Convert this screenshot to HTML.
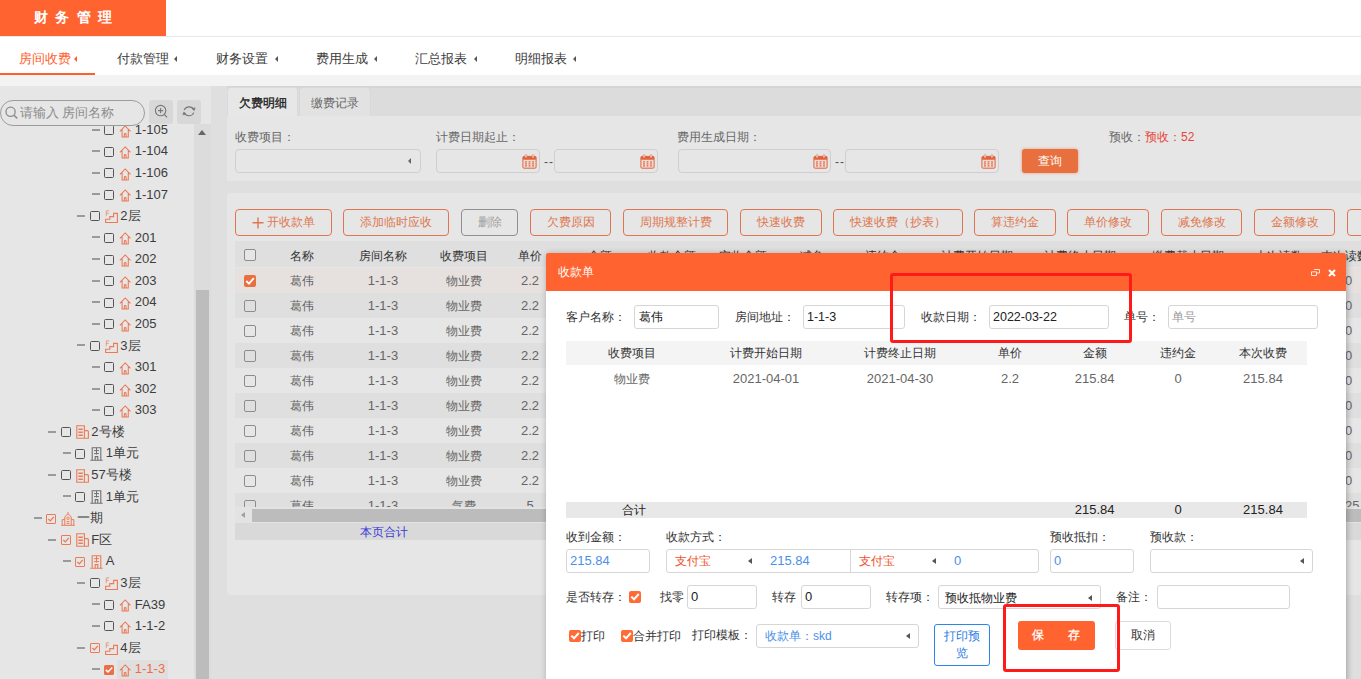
<!DOCTYPE html>
<html><head><meta charset="utf-8">
<style>
*{box-sizing:border-box;margin:0;padding:0}
html,body{width:1361px;height:679px;overflow:hidden;background:#fff}
body{position:relative;font-family:"Liberation Sans",sans-serif;font-size:12px;color:#555}
.a{position:absolute}
.t{position:absolute;white-space:nowrap;line-height:16px}
.nav{position:absolute;top:50.5px;font-size:13px;color:#3a3a3a;line-height:16px;white-space:nowrap}
.arr{position:absolute;width:0;height:0;border-top:3px solid transparent;border-bottom:3px solid transparent;border-right:3.5px solid #555}
.inp{position:absolute;border:1px solid #cfcfcf;border-radius:4px}
.btn{position:absolute;border:1px solid #e0764f;border-radius:4px;color:#e0764f;text-align:center;line-height:24px;font-size:12px;white-space:nowrap}
.cb{position:absolute;width:12px;height:12px;border:1px solid #8a8a8a;border-radius:2px}
.tr{position:absolute;height:21px;line-height:21px;white-space:nowrap;font-size:13px;color:#444}
</style></head><body>
<!-- HEADER -->
<div class="a" style="left:0;top:0;width:166px;height:36px;background:#ff6330"></div>
<div class="t" style="left:34px;top:9px;color:#fff;font-weight:bold;font-size:14px;letter-spacing:7.3px">财务管理</div>
<div class="a" style="left:0;top:36px;width:1361px;height:1px;background:#e8e8e8"></div>
<!-- NAV -->
<div class="nav" style="left:19px;color:#ff5f2e">房间收费</div><div class="arr" style="left:74px;top:56px;border-right-color:#ff5f2e"></div>
<div class="nav" style="left:117px">付款管理</div><div class="arr" style="left:174px;top:56px"></div>
<div class="nav" style="left:216px">财务设置</div><div class="arr" style="left:275px;top:56px"></div>
<div class="nav" style="left:316px">费用生成</div><div class="arr" style="left:374px;top:56px"></div>
<div class="nav" style="left:415px">汇总报表</div><div class="arr" style="left:474px;top:56px"></div>
<div class="nav" style="left:515px">明细报表</div><div class="arr" style="left:573px;top:56px"></div>
<div class="a" style="left:0;top:73px;width:95px;height:2px;background:#ff5f2e"></div>
<div class="a" style="left:0;top:75px;width:1361px;height:11px;background:#f3f3f3"></div>
<!-- CONTENT BG -->
<div class="a" style="left:0;top:86px;width:1361px;height:593px;background:#dfdfdf"></div>
<div class="a" style="left:0;top:86px;width:211px;height:593px;background:#e6e6e6"></div>
<!--LEFT-->
<div class="a" style="left:0;top:124px;width:194px;height:555px;overflow:hidden">
<div class="a" style="left:0;top:-124px;width:194px;height:800px">
<div class="a" style="left:117px;top:660px;width:51px;height:21px;background:#dfdfdf"></div>
<div class="a" style="left:91.7px;top:129px;width:8px;height:2px;background:#9a9a9a"></div>
<div class="a" style="left:104.0px;top:125px;width:10px;height:10px;border:1px solid #555;border-radius:1.5px"></div>
<div class="a" style="left:119.2px;top:125px;width:13px;height:14px"><svg width="13" height="13" viewBox="0 0 13 13"><path d="M0.9 6.3 L6.2 1 L11.5 6.3 M3.1 4.6 V11.9 H9.3 V4.6 M5.3 11.9 V9.4 Q5.3 8.6 6.2 8.6 Q7.1 8.6 7.1 9.4 V11.9" fill="none" stroke="#ec7a56" stroke-width="1.05"/></svg></div>
<div class="tr" style="left:134.8px;top:119px;color:#3c3c3c">1-105</div>
<div class="a" style="left:91.7px;top:150px;width:8px;height:2px;background:#9a9a9a"></div>
<div class="a" style="left:104.0px;top:147px;width:10px;height:10px;border:1px solid #555;border-radius:1.5px"></div>
<div class="a" style="left:119.2px;top:146px;width:13px;height:14px"><svg width="13" height="13" viewBox="0 0 13 13"><path d="M0.9 6.3 L6.2 1 L11.5 6.3 M3.1 4.6 V11.9 H9.3 V4.6 M5.3 11.9 V9.4 Q5.3 8.6 6.2 8.6 Q7.1 8.6 7.1 9.4 V11.9" fill="none" stroke="#ec7a56" stroke-width="1.05"/></svg></div>
<div class="tr" style="left:134.8px;top:140px;color:#3c3c3c">1-104</div>
<div class="a" style="left:91.7px;top:172px;width:8px;height:2px;background:#9a9a9a"></div>
<div class="a" style="left:104.0px;top:168px;width:10px;height:10px;border:1px solid #555;border-radius:1.5px"></div>
<div class="a" style="left:119.2px;top:168px;width:13px;height:14px"><svg width="13" height="13" viewBox="0 0 13 13"><path d="M0.9 6.3 L6.2 1 L11.5 6.3 M3.1 4.6 V11.9 H9.3 V4.6 M5.3 11.9 V9.4 Q5.3 8.6 6.2 8.6 Q7.1 8.6 7.1 9.4 V11.9" fill="none" stroke="#ec7a56" stroke-width="1.05"/></svg></div>
<div class="tr" style="left:134.8px;top:162px;color:#3c3c3c">1-106</div>
<div class="a" style="left:91.7px;top:193px;width:8px;height:2px;background:#9a9a9a"></div>
<div class="a" style="left:104.0px;top:190px;width:10px;height:10px;border:1px solid #555;border-radius:1.5px"></div>
<div class="a" style="left:119.2px;top:189px;width:13px;height:14px"><svg width="13" height="13" viewBox="0 0 13 13"><path d="M0.9 6.3 L6.2 1 L11.5 6.3 M3.1 4.6 V11.9 H9.3 V4.6 M5.3 11.9 V9.4 Q5.3 8.6 6.2 8.6 Q7.1 8.6 7.1 9.4 V11.9" fill="none" stroke="#ec7a56" stroke-width="1.05"/></svg></div>
<div class="tr" style="left:134.8px;top:184px;color:#3c3c3c">1-107</div>
<div class="a" style="left:77.2px;top:215px;width:8px;height:2px;background:#9a9a9a"></div>
<div class="a" style="left:89.5px;top:211px;width:10px;height:10px;border:1px solid #555;border-radius:1.5px"></div>
<div class="a" style="left:104.7px;top:210px;width:13px;height:14px"><svg width="13" height="13" viewBox="0 0 13 13"><path d="M0.6 12.5 V9.3 H4.8 V6.6 H8.6 V3.4 H12.4 V12.5 Z" fill="none" stroke="#ec7a56" stroke-width="1.1"/><path d="M1.3 6.2 V0.9 H4.2 M1.3 3.4 H3.7" fill="none" stroke="#ec7a56" stroke-width="0.9" opacity="0.75"/></svg></div>
<div class="tr" style="left:120.3px;top:205px;color:#3c3c3c">2层</div>
<div class="a" style="left:91.7px;top:236px;width:8px;height:2px;background:#9a9a9a"></div>
<div class="a" style="left:104.0px;top:233px;width:10px;height:10px;border:1px solid #555;border-radius:1.5px"></div>
<div class="a" style="left:119.2px;top:232px;width:13px;height:14px"><svg width="13" height="13" viewBox="0 0 13 13"><path d="M0.9 6.3 L6.2 1 L11.5 6.3 M3.1 4.6 V11.9 H9.3 V4.6 M5.3 11.9 V9.4 Q5.3 8.6 6.2 8.6 Q7.1 8.6 7.1 9.4 V11.9" fill="none" stroke="#ec7a56" stroke-width="1.05"/></svg></div>
<div class="tr" style="left:134.8px;top:227px;color:#3c3c3c">201</div>
<div class="a" style="left:91.7px;top:258px;width:8px;height:2px;background:#9a9a9a"></div>
<div class="a" style="left:104.0px;top:255px;width:10px;height:10px;border:1px solid #555;border-radius:1.5px"></div>
<div class="a" style="left:119.2px;top:254px;width:13px;height:14px"><svg width="13" height="13" viewBox="0 0 13 13"><path d="M0.9 6.3 L6.2 1 L11.5 6.3 M3.1 4.6 V11.9 H9.3 V4.6 M5.3 11.9 V9.4 Q5.3 8.6 6.2 8.6 Q7.1 8.6 7.1 9.4 V11.9" fill="none" stroke="#ec7a56" stroke-width="1.05"/></svg></div>
<div class="tr" style="left:134.8px;top:248px;color:#3c3c3c">202</div>
<div class="a" style="left:91.7px;top:280px;width:8px;height:2px;background:#9a9a9a"></div>
<div class="a" style="left:104.0px;top:276px;width:10px;height:10px;border:1px solid #555;border-radius:1.5px"></div>
<div class="a" style="left:119.2px;top:276px;width:13px;height:14px"><svg width="13" height="13" viewBox="0 0 13 13"><path d="M0.9 6.3 L6.2 1 L11.5 6.3 M3.1 4.6 V11.9 H9.3 V4.6 M5.3 11.9 V9.4 Q5.3 8.6 6.2 8.6 Q7.1 8.6 7.1 9.4 V11.9" fill="none" stroke="#ec7a56" stroke-width="1.05"/></svg></div>
<div class="tr" style="left:134.8px;top:270px;color:#3c3c3c">203</div>
<div class="a" style="left:91.7px;top:301px;width:8px;height:2px;background:#9a9a9a"></div>
<div class="a" style="left:104.0px;top:298px;width:10px;height:10px;border:1px solid #555;border-radius:1.5px"></div>
<div class="a" style="left:119.2px;top:297px;width:13px;height:14px"><svg width="13" height="13" viewBox="0 0 13 13"><path d="M0.9 6.3 L6.2 1 L11.5 6.3 M3.1 4.6 V11.9 H9.3 V4.6 M5.3 11.9 V9.4 Q5.3 8.6 6.2 8.6 Q7.1 8.6 7.1 9.4 V11.9" fill="none" stroke="#ec7a56" stroke-width="1.05"/></svg></div>
<div class="tr" style="left:134.8px;top:291px;color:#3c3c3c">204</div>
<div class="a" style="left:91.7px;top:323px;width:8px;height:2px;background:#9a9a9a"></div>
<div class="a" style="left:104.0px;top:319px;width:10px;height:10px;border:1px solid #555;border-radius:1.5px"></div>
<div class="a" style="left:119.2px;top:319px;width:13px;height:14px"><svg width="13" height="13" viewBox="0 0 13 13"><path d="M0.9 6.3 L6.2 1 L11.5 6.3 M3.1 4.6 V11.9 H9.3 V4.6 M5.3 11.9 V9.4 Q5.3 8.6 6.2 8.6 Q7.1 8.6 7.1 9.4 V11.9" fill="none" stroke="#ec7a56" stroke-width="1.05"/></svg></div>
<div class="tr" style="left:134.8px;top:313px;color:#3c3c3c">205</div>
<div class="a" style="left:77.2px;top:344px;width:8px;height:2px;background:#9a9a9a"></div>
<div class="a" style="left:89.5px;top:341px;width:10px;height:10px;border:1px solid #555;border-radius:1.5px"></div>
<div class="a" style="left:104.7px;top:340px;width:13px;height:14px"><svg width="13" height="13" viewBox="0 0 13 13"><path d="M0.6 12.5 V9.3 H4.8 V6.6 H8.6 V3.4 H12.4 V12.5 Z" fill="none" stroke="#ec7a56" stroke-width="1.1"/><path d="M1.3 6.2 V0.9 H4.2 M1.3 3.4 H3.7" fill="none" stroke="#ec7a56" stroke-width="0.9" opacity="0.75"/></svg></div>
<div class="tr" style="left:120.3px;top:335px;color:#3c3c3c">3层</div>
<div class="a" style="left:91.7px;top:366px;width:8px;height:2px;background:#9a9a9a"></div>
<div class="a" style="left:104.0px;top:362px;width:10px;height:10px;border:1px solid #555;border-radius:1.5px"></div>
<div class="a" style="left:119.2px;top:362px;width:13px;height:14px"><svg width="13" height="13" viewBox="0 0 13 13"><path d="M0.9 6.3 L6.2 1 L11.5 6.3 M3.1 4.6 V11.9 H9.3 V4.6 M5.3 11.9 V9.4 Q5.3 8.6 6.2 8.6 Q7.1 8.6 7.1 9.4 V11.9" fill="none" stroke="#ec7a56" stroke-width="1.05"/></svg></div>
<div class="tr" style="left:134.8px;top:356px;color:#3c3c3c">301</div>
<div class="a" style="left:91.7px;top:388px;width:8px;height:2px;background:#9a9a9a"></div>
<div class="a" style="left:104.0px;top:384px;width:10px;height:10px;border:1px solid #555;border-radius:1.5px"></div>
<div class="a" style="left:119.2px;top:384px;width:13px;height:14px"><svg width="13" height="13" viewBox="0 0 13 13"><path d="M0.9 6.3 L6.2 1 L11.5 6.3 M3.1 4.6 V11.9 H9.3 V4.6 M5.3 11.9 V9.4 Q5.3 8.6 6.2 8.6 Q7.1 8.6 7.1 9.4 V11.9" fill="none" stroke="#ec7a56" stroke-width="1.05"/></svg></div>
<div class="tr" style="left:134.8px;top:378px;color:#3c3c3c">302</div>
<div class="a" style="left:91.7px;top:409px;width:8px;height:2px;background:#9a9a9a"></div>
<div class="a" style="left:104.0px;top:406px;width:10px;height:10px;border:1px solid #555;border-radius:1.5px"></div>
<div class="a" style="left:119.2px;top:405px;width:13px;height:14px"><svg width="13" height="13" viewBox="0 0 13 13"><path d="M0.9 6.3 L6.2 1 L11.5 6.3 M3.1 4.6 V11.9 H9.3 V4.6 M5.3 11.9 V9.4 Q5.3 8.6 6.2 8.6 Q7.1 8.6 7.1 9.4 V11.9" fill="none" stroke="#ec7a56" stroke-width="1.05"/></svg></div>
<div class="tr" style="left:134.8px;top:399px;color:#3c3c3c">303</div>
<div class="a" style="left:48.2px;top:431px;width:8px;height:2px;background:#9a9a9a"></div>
<div class="a" style="left:60.5px;top:427px;width:10px;height:10px;border:1px solid #555;border-radius:1.5px"></div>
<div class="a" style="left:75.7px;top:425px;width:13px;height:14px"><svg width="13" height="14" viewBox="0 0 13 14"><path d="M0.8 0.8 H8.4 V13.3 H0.8 Z M8.4 5.6 H11.2 Q12.4 5.6 12.4 6.8 V13.3 H8.4" fill="none" stroke="#ec7a56" stroke-width="1.1"/><path d="M2.4 4.2 H6.8 M2.4 7.2 H6.8 M2.4 10.2 H6.8" stroke="#ec7a56" stroke-width="1.5"/></svg></div>
<div class="tr" style="left:91.3px;top:421px;color:#3c3c3c">2号楼</div>
<div class="a" style="left:62.7px;top:452px;width:8px;height:2px;background:#9a9a9a"></div>
<div class="a" style="left:75.0px;top:449px;width:10px;height:10px;border:1px solid #555;border-radius:1.5px"></div>
<div class="a" style="left:90.2px;top:447px;width:13px;height:14px"><svg width="13" height="14" viewBox="0 0 13 14"><path d="M2.2 13 V0.8 H10.8 V13 M0.3 13.2 H12.7 M5.2 13 V9.6 H7.8 V13" fill="none" stroke="#707070" stroke-width="1.1"/><path d="M4 3.6 H9 M4 6.6 H9 M6.5 0.8 V7.5" stroke="#707070" stroke-width="1"/></svg></div>
<div class="tr" style="left:105.8px;top:442px;color:#3c3c3c">1单元</div>
<div class="a" style="left:48.2px;top:474px;width:8px;height:2px;background:#9a9a9a"></div>
<div class="a" style="left:60.5px;top:470px;width:10px;height:10px;border:1px solid #555;border-radius:1.5px"></div>
<div class="a" style="left:75.7px;top:469px;width:13px;height:14px"><svg width="13" height="14" viewBox="0 0 13 14"><path d="M0.8 0.8 H8.4 V13.3 H0.8 Z M8.4 5.6 H11.2 Q12.4 5.6 12.4 6.8 V13.3 H8.4" fill="none" stroke="#ec7a56" stroke-width="1.1"/><path d="M2.4 4.2 H6.8 M2.4 7.2 H6.8 M2.4 10.2 H6.8" stroke="#ec7a56" stroke-width="1.5"/></svg></div>
<div class="tr" style="left:91.3px;top:464px;color:#3c3c3c">57号楼</div>
<div class="a" style="left:62.7px;top:495px;width:8px;height:2px;background:#9a9a9a"></div>
<div class="a" style="left:75.0px;top:492px;width:10px;height:10px;border:1px solid #555;border-radius:1.5px"></div>
<div class="a" style="left:90.2px;top:490px;width:13px;height:14px"><svg width="13" height="14" viewBox="0 0 13 14"><path d="M2.2 13 V0.8 H10.8 V13 M0.3 13.2 H12.7 M5.2 13 V9.6 H7.8 V13" fill="none" stroke="#707070" stroke-width="1.1"/><path d="M4 3.6 H9 M4 6.6 H9 M6.5 0.8 V7.5" stroke="#707070" stroke-width="1"/></svg></div>
<div class="tr" style="left:105.8px;top:486px;color:#3c3c3c">1单元</div>
<div class="a" style="left:33.7px;top:517px;width:8px;height:2px;background:#9a9a9a"></div>
<div class="a" style="left:46.0px;top:514px;width:10px;height:10px;border:1px solid #ec7a56;border-radius:1px"><svg class="a" style="left:0;top:0" width="8" height="8" viewBox="0 0 8 8"><path d="M1.3 4 L3.3 5.9 L6.8 1.8" fill="none" stroke="#ec7a56" stroke-width="1.3"/></svg></div>
<div class="a" style="left:61.2px;top:512px;width:14px;height:14px"><svg width="14" height="14" viewBox="0 0 14 14"><path d="M0.3 13.3 H13.7 M1.2 13 V7.6 H3.8 M12.8 13 V7.6 H10.2 M3.8 13 V4.8 L7 1.8 L10.2 4.8 V13 M5.6 9.6 H8.4 M5.6 11.4 H8.4" fill="none" stroke="#ec7a56" stroke-width="1"/><circle cx="7" cy="6.3" r="1.2" fill="none" stroke="#ec7a56" stroke-width="0.9"/><path d="M7 0 V1.8" stroke="#ec7a56" stroke-width="1"/></svg></div>
<div class="tr" style="left:76.8px;top:507px;color:#3c3c3c">一期</div>
<div class="a" style="left:48.2px;top:539px;width:8px;height:2px;background:#9a9a9a"></div>
<div class="a" style="left:60.5px;top:535px;width:10px;height:10px;border:1px solid #ec7a56;border-radius:1px"><svg class="a" style="left:0;top:0" width="8" height="8" viewBox="0 0 8 8"><path d="M1.3 4 L3.3 5.9 L6.8 1.8" fill="none" stroke="#ec7a56" stroke-width="1.3"/></svg></div>
<div class="a" style="left:75.7px;top:533px;width:13px;height:14px"><svg width="13" height="14" viewBox="0 0 13 14"><path d="M0.8 0.8 H8.4 V13.3 H0.8 Z M8.4 5.6 H11.2 Q12.4 5.6 12.4 6.8 V13.3 H8.4" fill="none" stroke="#ec7a56" stroke-width="1.1"/><path d="M2.4 4.2 H6.8 M2.4 7.2 H6.8 M2.4 10.2 H6.8" stroke="#ec7a56" stroke-width="1.5"/></svg></div>
<div class="tr" style="left:91.3px;top:529px;color:#3c3c3c">F区</div>
<div class="a" style="left:62.7px;top:560px;width:8px;height:2px;background:#9a9a9a"></div>
<div class="a" style="left:75.0px;top:557px;width:10px;height:10px;border:1px solid #ec7a56;border-radius:1px"><svg class="a" style="left:0;top:0" width="8" height="8" viewBox="0 0 8 8"><path d="M1.3 4 L3.3 5.9 L6.8 1.8" fill="none" stroke="#ec7a56" stroke-width="1.3"/></svg></div>
<div class="a" style="left:90.2px;top:555px;width:13px;height:14px"><svg width="13" height="14" viewBox="0 0 13 14"><path d="M2.2 13 V0.8 H10.8 V13 M0.3 13.2 H12.7 M5.2 13 V9.6 H7.8 V13" fill="none" stroke="#ec7a56" stroke-width="1.1"/><path d="M4 3.6 H9 M4 6.6 H9 M6.5 0.8 V7.5" stroke="#ec7a56" stroke-width="1"/></svg></div>
<div class="tr" style="left:105.8px;top:550px;color:#3c3c3c">A</div>
<div class="a" style="left:77.2px;top:582px;width:8px;height:2px;background:#9a9a9a"></div>
<div class="a" style="left:89.5px;top:578px;width:10px;height:10px;border:1px solid #555;border-radius:1.5px"></div>
<div class="a" style="left:104.7px;top:577px;width:13px;height:14px"><svg width="13" height="13" viewBox="0 0 13 13"><path d="M0.6 12.5 V9.3 H4.8 V6.6 H8.6 V3.4 H12.4 V12.5 Z" fill="none" stroke="#ec7a56" stroke-width="1.1"/><path d="M1.3 6.2 V0.9 H4.2 M1.3 3.4 H3.7" fill="none" stroke="#ec7a56" stroke-width="0.9" opacity="0.75"/></svg></div>
<div class="tr" style="left:120.3px;top:572px;color:#3c3c3c">3层</div>
<div class="a" style="left:91.7px;top:603px;width:8px;height:2px;background:#9a9a9a"></div>
<div class="a" style="left:104.0px;top:600px;width:10px;height:10px;border:1px solid #555;border-radius:1.5px"></div>
<div class="a" style="left:119.2px;top:599px;width:13px;height:14px"><svg width="13" height="13" viewBox="0 0 13 13"><path d="M0.9 6.3 L6.2 1 L11.5 6.3 M3.1 4.6 V11.9 H9.3 V4.6 M5.3 11.9 V9.4 Q5.3 8.6 6.2 8.6 Q7.1 8.6 7.1 9.4 V11.9" fill="none" stroke="#ec7a56" stroke-width="1.05"/></svg></div>
<div class="tr" style="left:134.8px;top:594px;color:#3c3c3c">FA39</div>
<div class="a" style="left:91.7px;top:625px;width:8px;height:2px;background:#9a9a9a"></div>
<div class="a" style="left:104.0px;top:621px;width:10px;height:10px;border:1px solid #555;border-radius:1.5px"></div>
<div class="a" style="left:119.2px;top:621px;width:13px;height:14px"><svg width="13" height="13" viewBox="0 0 13 13"><path d="M0.9 6.3 L6.2 1 L11.5 6.3 M3.1 4.6 V11.9 H9.3 V4.6 M5.3 11.9 V9.4 Q5.3 8.6 6.2 8.6 Q7.1 8.6 7.1 9.4 V11.9" fill="none" stroke="#ec7a56" stroke-width="1.05"/></svg></div>
<div class="tr" style="left:134.8px;top:615px;color:#3c3c3c">1-1-2</div>
<div class="a" style="left:77.2px;top:647px;width:8px;height:2px;background:#9a9a9a"></div>
<div class="a" style="left:89.5px;top:643px;width:10px;height:10px;border:1px solid #ec7a56;border-radius:1px"><svg class="a" style="left:0;top:0" width="8" height="8" viewBox="0 0 8 8"><path d="M1.3 4 L3.3 5.9 L6.8 1.8" fill="none" stroke="#ec7a56" stroke-width="1.3"/></svg></div>
<div class="a" style="left:104.7px;top:642px;width:13px;height:14px"><svg width="13" height="13" viewBox="0 0 13 13"><path d="M0.6 12.5 V9.3 H4.8 V6.6 H8.6 V3.4 H12.4 V12.5 Z" fill="none" stroke="#ec7a56" stroke-width="1.1"/><path d="M1.3 6.2 V0.9 H4.2 M1.3 3.4 H3.7" fill="none" stroke="#ec7a56" stroke-width="0.9" opacity="0.75"/></svg></div>
<div class="tr" style="left:120.3px;top:637px;color:#3c3c3c">4层</div>
<div class="a" style="left:91.7px;top:668px;width:8px;height:2px;background:#9a9a9a"></div>
<div class="a" style="left:104.0px;top:665px;width:10px;height:10px;background:#ea6f47;border-radius:1.5px"><svg class="a" style="left:0;top:0" width="10" height="10" viewBox="0 0 10 10"><path d="M1.8 4.9 L4 7 L8.2 2.6" fill="none" stroke="#fff" stroke-width="1.5"/></svg></div>
<div class="a" style="left:119.2px;top:664px;width:13px;height:14px"><svg width="13" height="13" viewBox="0 0 13 13"><path d="M0.9 6.3 L6.2 1 L11.5 6.3 M3.1 4.6 V11.9 H9.3 V4.6 M5.3 11.9 V9.4 Q5.3 8.6 6.2 8.6 Q7.1 8.6 7.1 9.4 V11.9" fill="none" stroke="#ec7a56" stroke-width="1.05"/></svg></div>
<div class="tr" style="left:134.8px;top:658px;color:#ef6d42">1-1-3</div>
</div></div>
<div class="a" style="left:194px;top:124px;width:17px;height:555px;background:#dcdcdc"></div>
<div class="a" style="left:198px;top:130px;width:0;height:0;border-left:4px solid transparent;border-right:4px solid transparent;border-bottom:5px solid #666"></div>
<div class="a" style="left:196px;top:290px;width:13px;height:389px;background:#bcbcbc"></div>
<div class="a" style="left:0;top:100px;width:145px;height:26px;border:1px solid #9c9c9c;border-radius:13px;background:#e6e6e6"></div>
<svg class="a" style="left:4px;top:105px" width="16" height="16" viewBox="0 0 16 16"><circle cx="6.6" cy="6.8" r="4.6" fill="none" stroke="#8c8c8c" stroke-width="1.3"/><path d="M10 10.2 L13.2 13.4" stroke="#8c8c8c" stroke-width="1.5"/></svg>
<div class="t" style="left:20px;top:105px;font-size:12.5px;color:#8c8c8c">请输入 房间名称</div>
<div class="a" style="left:149px;top:100px;width:24px;height:24px;background:#d8d8d8;border-radius:3px"></div>
<svg class="a" style="left:149px;top:100px" width="24" height="24" viewBox="0 0 24 24"><circle cx="11.6" cy="10.6" r="5.2" fill="none" stroke="#777" stroke-width="1.1"/><path d="M15.3 14.4 L18 17.4" stroke="#777" stroke-width="1.2"/><path d="M9 10.6 H14.2 M11.6 8 V13.2" stroke="#777" stroke-width="1.1"/></svg>
<div class="a" style="left:177px;top:100px;width:24px;height:24px;background:#d8d8d8;border-radius:3px"></div>
<svg class="a" style="left:177px;top:100px" width="24" height="24" viewBox="0 0 24 24"><path d="M7.2 10 A5.3 5.3 0 0 1 16.8 9.8 M16.8 12.6 A5.3 5.3 0 0 1 7.2 12.8" fill="none" stroke="#777" stroke-width="1.1"/><path d="M15 8.6 L17.2 10.6 L18.2 7.8 Z M9 14 L6.8 12 L5.8 14.8 Z" fill="#777" stroke="#777" stroke-width="0.6"/></svg>

<!--RIGHT-->
<div class="a" style="left:227px;top:86px;width:1134px;height:30px;background:#dcdcdc"></div>
<div class="a" style="left:227px;top:86px;width:1134px;height:2px;background:#d4d4d4"></div>
<div class="a" style="left:227px;top:87px;width:71px;height:29px;background:#e7e7e7;border:1px solid #dadada;border-bottom:none;border-radius:4px 4px 0 0"></div>
<div class="a" style="left:299px;top:87px;width:72px;height:29px;background:#e2e2e2;border:1px solid #d8d8d8;border-bottom:none;border-radius:4px 4px 0 0"></div>
<div class="t" style="left:239px;top:95px;font-size:12px;color:#222;-webkit-text-stroke:0.35px #222">欠费明细</div>
<div class="t" style="left:311px;top:95px;font-size:12px;color:#666">缴费记录</div>
<div class="a" style="left:227px;top:116px;width:1134px;height:65px;background:#e6e6e6"></div>
<div class="t" style="left:235px;top:129px;color:#666">收费项目：</div>
<div class="t" style="left:436px;top:129px;color:#666">计费日期起止：</div>
<div class="t" style="left:677px;top:129px;color:#666">费用生成日期：</div>
<div class="t" style="left:1109px;top:129px;color:#666">预收：<span style="color:#e8453c">预收：52</span></div>
<div class="inp" style="left:235px;top:149px;width:186px;height:24px"></div>
<div class="arr" style="left:408px;top:158px;border-right-color:#666"></div>
<div class="inp" style="left:436px;top:149px;width:104px;height:24px"></div>
<svg class="a" style="left:522px;top:154px" width="15" height="15" viewBox="0 0 15 15"><rect x="0.9" y="2.4" width="13.2" height="11.8" rx="1.2" fill="#eedcd5" stroke="#e2633e" stroke-width="1"/><rect x="0.9" y="2.4" width="13.2" height="3.4" rx="1" fill="#e2633e"/><rect x="3.1" y="0.6" width="1.8" height="3.2" rx="0.9" fill="#f4e4de" stroke="#e2633e" stroke-width="0.5"/><rect x="10.1" y="0.6" width="1.8" height="3.2" rx="0.9" fill="#f4e4de" stroke="#e2633e" stroke-width="0.5"/><g fill="#e2633e"><rect x="3" y="7.2" width="2" height="1.2" rx="0.5"/><rect x="6.5" y="7.2" width="2" height="1.2" rx="0.5"/><rect x="10" y="7.2" width="2" height="1.2" rx="0.5"/><rect x="3" y="9.3" width="2" height="1.2" rx="0.5"/><rect x="6.5" y="9.3" width="2" height="1.2" rx="0.5"/><rect x="10" y="9.3" width="2" height="1.2" rx="0.5"/><rect x="3" y="11.3" width="2" height="1.2" rx="0.5"/><rect x="6.5" y="11.3" width="2" height="1.2" rx="0.5"/><rect x="10" y="11.3" width="2" height="1.2" rx="0.5"/></g></svg>
<div class="inp" style="left:554px;top:149px;width:104px;height:24px"></div>
<svg class="a" style="left:640px;top:154px" width="15" height="15" viewBox="0 0 15 15"><rect x="0.9" y="2.4" width="13.2" height="11.8" rx="1.2" fill="#eedcd5" stroke="#e2633e" stroke-width="1"/><rect x="0.9" y="2.4" width="13.2" height="3.4" rx="1" fill="#e2633e"/><rect x="3.1" y="0.6" width="1.8" height="3.2" rx="0.9" fill="#f4e4de" stroke="#e2633e" stroke-width="0.5"/><rect x="10.1" y="0.6" width="1.8" height="3.2" rx="0.9" fill="#f4e4de" stroke="#e2633e" stroke-width="0.5"/><g fill="#e2633e"><rect x="3" y="7.2" width="2" height="1.2" rx="0.5"/><rect x="6.5" y="7.2" width="2" height="1.2" rx="0.5"/><rect x="10" y="7.2" width="2" height="1.2" rx="0.5"/><rect x="3" y="9.3" width="2" height="1.2" rx="0.5"/><rect x="6.5" y="9.3" width="2" height="1.2" rx="0.5"/><rect x="10" y="9.3" width="2" height="1.2" rx="0.5"/><rect x="3" y="11.3" width="2" height="1.2" rx="0.5"/><rect x="6.5" y="11.3" width="2" height="1.2" rx="0.5"/><rect x="10" y="11.3" width="2" height="1.2" rx="0.5"/></g></svg>
<div class="inp" style="left:678px;top:149px;width:153px;height:24px"></div>
<svg class="a" style="left:813px;top:154px" width="15" height="15" viewBox="0 0 15 15"><rect x="0.9" y="2.4" width="13.2" height="11.8" rx="1.2" fill="#eedcd5" stroke="#e2633e" stroke-width="1"/><rect x="0.9" y="2.4" width="13.2" height="3.4" rx="1" fill="#e2633e"/><rect x="3.1" y="0.6" width="1.8" height="3.2" rx="0.9" fill="#f4e4de" stroke="#e2633e" stroke-width="0.5"/><rect x="10.1" y="0.6" width="1.8" height="3.2" rx="0.9" fill="#f4e4de" stroke="#e2633e" stroke-width="0.5"/><g fill="#e2633e"><rect x="3" y="7.2" width="2" height="1.2" rx="0.5"/><rect x="6.5" y="7.2" width="2" height="1.2" rx="0.5"/><rect x="10" y="7.2" width="2" height="1.2" rx="0.5"/><rect x="3" y="9.3" width="2" height="1.2" rx="0.5"/><rect x="6.5" y="9.3" width="2" height="1.2" rx="0.5"/><rect x="10" y="9.3" width="2" height="1.2" rx="0.5"/><rect x="3" y="11.3" width="2" height="1.2" rx="0.5"/><rect x="6.5" y="11.3" width="2" height="1.2" rx="0.5"/><rect x="10" y="11.3" width="2" height="1.2" rx="0.5"/></g></svg>
<div class="inp" style="left:845px;top:149px;width:154px;height:24px"></div>
<svg class="a" style="left:981px;top:154px" width="15" height="15" viewBox="0 0 15 15"><rect x="0.9" y="2.4" width="13.2" height="11.8" rx="1.2" fill="#eedcd5" stroke="#e2633e" stroke-width="1"/><rect x="0.9" y="2.4" width="13.2" height="3.4" rx="1" fill="#e2633e"/><rect x="3.1" y="0.6" width="1.8" height="3.2" rx="0.9" fill="#f4e4de" stroke="#e2633e" stroke-width="0.5"/><rect x="10.1" y="0.6" width="1.8" height="3.2" rx="0.9" fill="#f4e4de" stroke="#e2633e" stroke-width="0.5"/><g fill="#e2633e"><rect x="3" y="7.2" width="2" height="1.2" rx="0.5"/><rect x="6.5" y="7.2" width="2" height="1.2" rx="0.5"/><rect x="10" y="7.2" width="2" height="1.2" rx="0.5"/><rect x="3" y="9.3" width="2" height="1.2" rx="0.5"/><rect x="6.5" y="9.3" width="2" height="1.2" rx="0.5"/><rect x="10" y="9.3" width="2" height="1.2" rx="0.5"/><rect x="3" y="11.3" width="2" height="1.2" rx="0.5"/><rect x="6.5" y="11.3" width="2" height="1.2" rx="0.5"/><rect x="10" y="11.3" width="2" height="1.2" rx="0.5"/></g></svg>
<div class="t" style="left:544px;top:154px;color:#555;letter-spacing:1px">--</div>
<div class="t" style="left:835px;top:154px;color:#555;letter-spacing:1px">--</div>
<div class="a" style="left:1022px;top:149px;width:56px;height:24px;background:#e8703f;border-radius:3px;box-shadow:0 0 3px rgba(230,100,50,0.6);color:#fff;text-align:center;line-height:24px">查询</div>
<div class="a" style="left:227px;top:193px;width:1134px;height:402px;background:#e6e6e6;border-radius:3px"></div>
<div class="btn" style="left:235px;top:209px;width:97px;height:27px;"><svg style="position:absolute;left:16px;top:7px" width="12" height="12" viewBox="0 0 12 12"><path d="M0.5 5.8 H11.5 M6 0.5 V11.5" stroke="#e0764f" stroke-width="1.4"/></svg><span style="position:absolute;left:31px;top:0">开收款单</span></div>
<div class="btn" style="left:343px;top:209px;width:106px;height:27px;">添加临时应收</div>
<div class="btn" style="left:461px;top:209px;width:57px;height:27px;border-color:#909090;color:#a0a0a0;">删除</div>
<div class="btn" style="left:530px;top:209px;width:81px;height:27px;">欠费原因</div>
<div class="btn" style="left:623px;top:209px;width:105px;height:27px;">周期规整计费</div>
<div class="btn" style="left:740px;top:209px;width:82px;height:27px;">快速收费</div>
<div class="btn" style="left:833px;top:209px;width:130px;height:27px;">快速收费（抄表）</div>
<div class="btn" style="left:974px;top:209px;width:82px;height:27px;">算违约金</div>
<div class="btn" style="left:1067px;top:209px;width:82px;height:27px;">单价修改</div>
<div class="btn" style="left:1161px;top:209px;width:81px;height:27px;">减免修改</div>
<div class="btn" style="left:1254px;top:209px;width:81px;height:27px;">金额修改</div>
<div class="btn" style="left:1347px;top:209px;width:73px;height:27px;"></div>
<div class="a" style="left:235px;top:241px;width:1126px;height:266px;overflow:hidden">
<div class="a" style="left:0;top:0;width:1200px;height:26px;background:#dfdfdf"></div>
<div class="a" style="left:0;top:27px;width:1200px;height:25px;background:#e6e1df"></div>
<div class="a" style="left:0;top:52px;width:1200px;height:25px;background:#dfdfdf"></div>
<div class="a" style="left:0;top:77px;width:1200px;height:25px;background:#e6e6e6"></div>
<div class="a" style="left:0;top:102px;width:1200px;height:25px;background:#dfdfdf"></div>
<div class="a" style="left:0;top:127px;width:1200px;height:25px;background:#e6e6e6"></div>
<div class="a" style="left:0;top:152px;width:1200px;height:25px;background:#dfdfdf"></div>
<div class="a" style="left:0;top:177px;width:1200px;height:25px;background:#e6e6e6"></div>
<div class="a" style="left:0;top:202px;width:1200px;height:25px;background:#dfdfdf"></div>
<div class="a" style="left:0;top:227px;width:1200px;height:25px;background:#e6e6e6"></div>
<div class="a" style="left:0;top:252px;width:1200px;height:25px;background:#dfdfdf"></div>
<div class="t" style="left:7px;top:7px;width:120px;text-align:center;font-size:12px;color:#333">名称</div>
<div class="t" style="left:88px;top:7px;width:120px;text-align:center;font-size:12px;color:#333">房间名称</div>
<div class="t" style="left:168.5px;top:7px;width:120px;text-align:center;font-size:12px;color:#333">收费项目</div>
<div class="t" style="left:235px;top:7px;width:120px;text-align:center;font-size:12px;color:#333">单价</div>
<div class="t" style="left:305px;top:7px;width:120px;text-align:center;font-size:12px;color:#333">金额</div>
<div class="t" style="left:377px;top:7px;width:120px;text-align:center;font-size:12px;color:#333">收款金额</div>
<div class="t" style="left:448px;top:7px;width:120px;text-align:center;font-size:12px;color:#333">实收金额</div>
<div class="t" style="left:517px;top:7px;width:120px;text-align:center;font-size:12px;color:#333">减免</div>
<div class="t" style="left:588px;top:7px;width:120px;text-align:center;font-size:12px;color:#333">违约金</div>
<div class="t" style="left:682px;top:7px;width:120px;text-align:center;font-size:12px;color:#333">计费开始日期</div>
<div class="t" style="left:785px;top:7px;width:120px;text-align:center;font-size:12px;color:#333">计费终止日期</div>
<div class="t" style="left:893px;top:7px;width:120px;text-align:center;font-size:12px;color:#333">缴费截止日期</div>
<div class="t" style="left:984px;top:7px;width:120px;text-align:center;font-size:12px;color:#333">上次读数</div>
<div class="t" style="left:1050px;top:7px;width:120px;text-align:center;font-size:12px;color:#333">本次读数</div>
<div class="cb" style="left:9px;top:8px;border-color:#8c8c8c;background:#e6e6e6"></div>
<div class="a" style="left:9px;top:34px;width:12px;height:12px;background:#e8703f;border-radius:2px"><svg class="a" style="left:0;top:0" width="12" height="12" viewBox="0 0 12 12"><path d="M2.3 6 L5 8.6 L9.8 3.2" fill="none" stroke="#fff" stroke-width="1.8"/></svg></div>
<div class="t" style="left:7px;top:32px;width:120px;text-align:center;font-size:12px;color:#666">葛伟</div>
<div class="t" style="left:88px;top:32px;width:120px;text-align:center;font-size:13px;color:#666">1-1-3</div>
<div class="t" style="left:168.5px;top:32px;width:120px;text-align:center;font-size:12px;color:#666">物业费</div>
<div class="t" style="left:235px;top:32px;width:120px;text-align:center;font-size:13px;color:#666">2.2</div>
<div class="t" style="left:1110px;top:32px;font-size:13px;color:#666">0</div>
<div class="cb" style="left:9px;top:59px;border-color:#8c8c8c"></div>
<div class="t" style="left:7px;top:57px;width:120px;text-align:center;font-size:12px;color:#666">葛伟</div>
<div class="t" style="left:88px;top:57px;width:120px;text-align:center;font-size:13px;color:#666">1-1-3</div>
<div class="t" style="left:168.5px;top:57px;width:120px;text-align:center;font-size:12px;color:#666">物业费</div>
<div class="t" style="left:235px;top:57px;width:120px;text-align:center;font-size:13px;color:#666">2.2</div>
<div class="t" style="left:1110px;top:57px;font-size:13px;color:#666">0</div>
<div class="cb" style="left:9px;top:84px;border-color:#8c8c8c"></div>
<div class="t" style="left:7px;top:82px;width:120px;text-align:center;font-size:12px;color:#666">葛伟</div>
<div class="t" style="left:88px;top:82px;width:120px;text-align:center;font-size:13px;color:#666">1-1-3</div>
<div class="t" style="left:168.5px;top:82px;width:120px;text-align:center;font-size:12px;color:#666">物业费</div>
<div class="t" style="left:235px;top:82px;width:120px;text-align:center;font-size:13px;color:#666">2.2</div>
<div class="t" style="left:1110px;top:82px;font-size:13px;color:#666">0</div>
<div class="cb" style="left:9px;top:109px;border-color:#8c8c8c"></div>
<div class="t" style="left:7px;top:107px;width:120px;text-align:center;font-size:12px;color:#666">葛伟</div>
<div class="t" style="left:88px;top:107px;width:120px;text-align:center;font-size:13px;color:#666">1-1-3</div>
<div class="t" style="left:168.5px;top:107px;width:120px;text-align:center;font-size:12px;color:#666">物业费</div>
<div class="t" style="left:235px;top:107px;width:120px;text-align:center;font-size:13px;color:#666">2.2</div>
<div class="t" style="left:1110px;top:107px;font-size:13px;color:#666">0</div>
<div class="cb" style="left:9px;top:134px;border-color:#8c8c8c"></div>
<div class="t" style="left:7px;top:132px;width:120px;text-align:center;font-size:12px;color:#666">葛伟</div>
<div class="t" style="left:88px;top:132px;width:120px;text-align:center;font-size:13px;color:#666">1-1-3</div>
<div class="t" style="left:168.5px;top:132px;width:120px;text-align:center;font-size:12px;color:#666">物业费</div>
<div class="t" style="left:235px;top:132px;width:120px;text-align:center;font-size:13px;color:#666">2.2</div>
<div class="t" style="left:1110px;top:132px;font-size:13px;color:#666">0</div>
<div class="cb" style="left:9px;top:159px;border-color:#8c8c8c"></div>
<div class="t" style="left:7px;top:157px;width:120px;text-align:center;font-size:12px;color:#666">葛伟</div>
<div class="t" style="left:88px;top:157px;width:120px;text-align:center;font-size:13px;color:#666">1-1-3</div>
<div class="t" style="left:168.5px;top:157px;width:120px;text-align:center;font-size:12px;color:#666">物业费</div>
<div class="t" style="left:235px;top:157px;width:120px;text-align:center;font-size:13px;color:#666">2.2</div>
<div class="t" style="left:1110px;top:157px;font-size:13px;color:#666">0</div>
<div class="cb" style="left:9px;top:184px;border-color:#8c8c8c"></div>
<div class="t" style="left:7px;top:182px;width:120px;text-align:center;font-size:12px;color:#666">葛伟</div>
<div class="t" style="left:88px;top:182px;width:120px;text-align:center;font-size:13px;color:#666">1-1-3</div>
<div class="t" style="left:168.5px;top:182px;width:120px;text-align:center;font-size:12px;color:#666">物业费</div>
<div class="t" style="left:235px;top:182px;width:120px;text-align:center;font-size:13px;color:#666">2.2</div>
<div class="t" style="left:1110px;top:182px;font-size:13px;color:#666">0</div>
<div class="cb" style="left:9px;top:209px;border-color:#8c8c8c"></div>
<div class="t" style="left:7px;top:207px;width:120px;text-align:center;font-size:12px;color:#666">葛伟</div>
<div class="t" style="left:88px;top:207px;width:120px;text-align:center;font-size:13px;color:#666">1-1-3</div>
<div class="t" style="left:168.5px;top:207px;width:120px;text-align:center;font-size:12px;color:#666">物业费</div>
<div class="t" style="left:235px;top:207px;width:120px;text-align:center;font-size:13px;color:#666">2.2</div>
<div class="t" style="left:1110px;top:207px;font-size:13px;color:#666">0</div>
<div class="cb" style="left:9px;top:234px;border-color:#8c8c8c"></div>
<div class="t" style="left:7px;top:232px;width:120px;text-align:center;font-size:12px;color:#666">葛伟</div>
<div class="t" style="left:88px;top:232px;width:120px;text-align:center;font-size:13px;color:#666">1-1-3</div>
<div class="t" style="left:168.5px;top:232px;width:120px;text-align:center;font-size:12px;color:#666">物业费</div>
<div class="t" style="left:235px;top:232px;width:120px;text-align:center;font-size:13px;color:#666">2.2</div>
<div class="t" style="left:1110px;top:232px;font-size:13px;color:#666">0</div>
<div class="cb" style="left:9px;top:259px;border-color:#8c8c8c"></div>
<div class="t" style="left:7px;top:257px;width:120px;text-align:center;font-size:12px;color:#666">葛伟</div>
<div class="t" style="left:88px;top:257px;width:120px;text-align:center;font-size:13px;color:#666">1-1-3</div>
<div class="t" style="left:168.5px;top:257px;width:120px;text-align:center;font-size:12px;color:#666">气费</div>
<div class="t" style="left:235px;top:257px;width:120px;text-align:center;font-size:13px;color:#666">5</div>
<div class="t" style="left:1110px;top:257px;font-size:13px;color:#666">25</div>
</div>
<div class="a" style="left:235px;top:507px;width:1126px;height:16px;background:#e3e3e3"></div>
<div class="a" style="left:241px;top:512px;width:0;height:0;border-top:3.5px solid transparent;border-bottom:3.5px solid transparent;border-right:4px solid #a0a0a0"></div>
<div class="a" style="left:252px;top:509px;width:1109px;height:13px;background:#bcbcbc"></div>
<div class="a" style="left:235px;top:523px;width:1126px;height:17px;background:#d9d9d9"></div>
<div class="t" style="left:324px;top:524px;width:120px;text-align:center;color:#3a3ad8">本页合计</div>
<!--MODAL-->
<div class="a" style="left:546px;top:253px;width:800px;height:460px;background:#fff;border-radius:2px;box-shadow:1px 1px 6px rgba(0,0,0,0.3)"></div>
<div class="a" style="left:546px;top:253px;width:800px;height:38px;background:#ff6330;border-radius:2px 2px 0 0"></div>
<div class="t" style="left:558px;top:264px;font-size:12px;color:#fff">收款单</div>
<svg class="a" style="left:1311px;top:269px" width="9" height="7" viewBox="0 0 9 7"><path d="M3 0.5 H8.5 V4 H6 M0.5 2.8 H5.5 V6.5 H0.5 Z" fill="none" stroke="#fff" stroke-width="0.9" opacity="0.9"/></svg>
<svg class="a" style="left:1327.5px;top:268.5px" width="8" height="8" viewBox="0 0 8 8"><path d="M1 1 L7 7 M7 1 L1 7" stroke="#fff" stroke-width="2"/></svg>
<div class="t" style="left:566px;top:309px;font-size:12px;color:#333">客户名称：</div>
<div class="a" style="left:634px;top:305px;width:85px;height:24px;border:1px solid #d6d6d6;border-radius:3px;"></div>
<div class="t" style="left:639px;top:309px;font-size:12px;color:#222">葛伟</div>
<div class="t" style="left:735px;top:309px;font-size:12px;color:#333">房间地址：</div>
<div class="a" style="left:803px;top:305px;width:102px;height:24px;border:1px solid #d6d6d6;border-radius:3px;"></div>
<div class="t" style="left:807px;top:309px;font-size:12.5px;color:#222">1-1-3</div>
<div class="t" style="left:921px;top:309px;font-size:12px;color:#333">收款日期：</div>
<div class="a" style="left:989px;top:305px;width:120px;height:24px;border:1px solid #d6d6d6;border-radius:3px;"></div>
<div class="t" style="left:993px;top:309px;font-size:12.5px;color:#222">2022-03-22</div>
<div class="t" style="left:1124px;top:309px;font-size:12px;color:#333">单号：</div>
<div class="a" style="left:1168px;top:305px;width:150px;height:24px;border:1px solid #d6d6d6;border-radius:3px;"></div>
<div class="t" style="left:1172px;top:309px;font-size:12px;color:#999">单号</div>
<div class="a" style="left:566px;top:341px;width:741px;height:24px;background:#f4f4f4"></div>
<div class="t" style="left:571.75px;top:345px;width:120px;text-align:center;font-size:12px;color:#333">收费项目</div>
<div class="t" style="left:706px;top:345px;width:120px;text-align:center;font-size:12px;color:#333">计费开始日期</div>
<div class="t" style="left:840px;top:345px;width:120px;text-align:center;font-size:12px;color:#333">计费终止日期</div>
<div class="t" style="left:950px;top:345px;width:120px;text-align:center;font-size:12px;color:#333">单价</div>
<div class="t" style="left:1034.6px;top:345px;width:120px;text-align:center;font-size:12px;color:#333">金额</div>
<div class="t" style="left:1118px;top:345px;width:120px;text-align:center;font-size:12px;color:#333">违约金</div>
<div class="t" style="left:1203px;top:345px;width:120px;text-align:center;font-size:12px;color:#333">本次收费</div>
<div class="t" style="left:571.75px;top:371px;width:120px;text-align:center;font-size:12px;color:#666">物业费</div>
<div class="t" style="left:706px;top:371px;width:120px;text-align:center;font-size:13px;color:#666">2021-04-01</div>
<div class="t" style="left:840px;top:371px;width:120px;text-align:center;font-size:13px;color:#666">2021-04-30</div>
<div class="t" style="left:950px;top:371px;width:120px;text-align:center;font-size:13px;color:#666">2.2</div>
<div class="t" style="left:1034.6px;top:371px;width:120px;text-align:center;font-size:13px;color:#666">215.84</div>
<div class="t" style="left:1118px;top:371px;width:120px;text-align:center;font-size:13px;color:#666">0</div>
<div class="t" style="left:1203px;top:371px;width:120px;text-align:center;font-size:13px;color:#666">215.84</div>
<div class="a" style="left:566px;top:502px;width:741px;height:16px;background:#e8e8e8"></div>
<div class="t" style="left:573.5px;top:502px;width:120px;text-align:center;font-size:12px;color:#222">合计</div>
<div class="t" style="left:1034.6px;top:502px;width:120px;text-align:center;font-size:13px;color:#222">215.84</div>
<div class="t" style="left:1118px;top:502px;width:120px;text-align:center;font-size:13px;color:#222">0</div>
<div class="t" style="left:1203px;top:502px;width:120px;text-align:center;font-size:13px;color:#222">215.84</div>
<div class="t" style="left:566px;top:529px;font-size:12px;color:#333">收到金额：</div>
<div class="t" style="left:666px;top:529px;font-size:12px;color:#333">收款方式：</div>
<div class="t" style="left:1050px;top:529px;font-size:12px;color:#333">预收抵扣：</div>
<div class="t" style="left:1150px;top:529px;font-size:12px;color:#333">预收款：</div>
<div class="a" style="left:566px;top:549px;width:84px;height:24px;border:1px solid #d6d6d6;border-radius:3px;"></div>
<div class="t" style="left:570px;top:553px;font-size:13px;color:#4a8fe8">215.84</div>
<div class="a" style="left:666px;top:549px;width:373px;height:24px;border:1px solid #d6d6d6;border-radius:3px;"></div>
<div class="a" style="left:850px;top:550px;width:1px;height:22px;background:#d6d6d6"></div>
<div class="t" style="left:675px;top:553px;font-size:12px;color:#f0522d">支付宝</div>
<div class="a" style="left:748px;top:558px;width:0;height:0;border-top:3px solid transparent;border-bottom:3px solid transparent;border-right:4px solid #555"></div>
<div class="t" style="left:770px;top:553px;font-size:13px;color:#4a8fe8">215.84</div>
<div class="t" style="left:859px;top:553px;font-size:12px;color:#f0522d">支付宝</div>
<div class="a" style="left:932px;top:558px;width:0;height:0;border-top:3px solid transparent;border-bottom:3px solid transparent;border-right:4px solid #555"></div>
<div class="t" style="left:954px;top:553px;font-size:13px;color:#4a8fe8">0</div>
<div class="a" style="left:1050px;top:549px;width:84px;height:24px;border:1px solid #d6d6d6;border-radius:3px;"></div>
<div class="t" style="left:1054px;top:553px;font-size:13px;color:#4a8fe8">0</div>
<div class="a" style="left:1150px;top:549px;width:163px;height:24px;border:1px solid #d6d6d6;border-radius:3px;"></div>
<div class="a" style="left:1300px;top:558px;width:0;height:0;border-top:3px solid transparent;border-bottom:3px solid transparent;border-right:4px solid #555"></div>
<div class="t" style="left:566px;top:589px;font-size:12px;color:#333">是否转存：</div>
<div class="a" style="left:629px;top:591px;width:12px;height:12px;background:#ff6a35;border-radius:2px"><svg class="a" style="left:0;top:0" width="12" height="12" viewBox="0 0 12 12"><path d="M2.3 5.6 L5 8.3 L9.8 3" fill="none" stroke="#fff" stroke-width="2"/></svg></div>
<div class="t" style="left:660px;top:589px;font-size:12px;color:#333">找零</div>
<div class="a" style="left:687px;top:585px;width:70px;height:24px;border:1px solid #d6d6d6;border-radius:3px;"></div>
<div class="t" style="left:691px;top:589px;font-size:13px;color:#222">0</div>
<div class="t" style="left:772px;top:589px;font-size:12px;color:#333">转存</div>
<div class="a" style="left:801px;top:585px;width:70px;height:24px;border:1px solid #d6d6d6;border-radius:3px;"></div>
<div class="t" style="left:805px;top:589px;font-size:13px;color:#222">0</div>
<div class="t" style="left:886px;top:589px;font-size:12px;color:#333">转存项：</div>
<div class="a" style="left:938px;top:585px;width:163px;height:24px;border:1px solid #d6d6d6;border-radius:3px;"></div>
<div class="t" style="left:945px;top:590px;font-size:12px;color:#222">预收抵物业费</div>
<div class="a" style="left:1088px;top:595px;width:0;height:0;border-top:3px solid transparent;border-bottom:3px solid transparent;border-right:4px solid #555"></div>
<div class="t" style="left:1116px;top:589px;font-size:12px;color:#333">备注：</div>
<div class="a" style="left:1157px;top:585px;width:133px;height:24px;border:1px solid #d6d6d6;border-radius:3px;"></div>
<div class="a" style="left:569px;top:630px;width:12px;height:12px;background:#ff6a35;border-radius:2px"><svg class="a" style="left:0;top:0" width="12" height="12" viewBox="0 0 12 12"><path d="M2.3 5.6 L5 8.3 L9.8 3" fill="none" stroke="#fff" stroke-width="2"/></svg></div>
<div class="t" style="left:581px;top:628px;font-size:12px;color:#333">打印</div>
<div class="a" style="left:621px;top:630px;width:12px;height:12px;background:#ff6a35;border-radius:2px"><svg class="a" style="left:0;top:0" width="12" height="12" viewBox="0 0 12 12"><path d="M2.3 5.6 L5 8.3 L9.8 3" fill="none" stroke="#fff" stroke-width="2"/></svg></div>
<div class="t" style="left:633px;top:628px;font-size:12px;color:#333">合并打印</div>
<div class="t" style="left:692px;top:627px;font-size:12px;color:#333">打印模板：</div>
<div class="a" style="left:756px;top:624px;width:163px;height:24px;border:1px solid #d6d6d6;border-radius:3px;"></div>
<div class="t" style="left:765px;top:628px;font-size:12px;color:#4a8fe8">收款单：skd</div>
<div class="a" style="left:906px;top:633px;width:0;height:0;border-top:3px solid transparent;border-bottom:3px solid transparent;border-right:4px solid #555"></div>
<div class="a" style="left:934px;top:624px;width:56px;height:42px;border:1px solid #2a86e8;border-radius:3px;color:#2a7de1;text-align:center;line-height:17px;padding:3px 6px 0 6px;white-space:normal;font-size:12px">打印预览</div>
<div class="a" style="left:1018px;top:621px;width:77px;height:29px;background:#ff6330;border-radius:3px;color:#fff;text-align:center;line-height:29px;font-size:12px;letter-spacing:0.5px;-webkit-text-stroke:0.3px #fff">保&nbsp;&nbsp;&nbsp;&nbsp;&nbsp;&nbsp;存</div>
<div class="a" style="left:1115px;top:621px;width:56px;height:29px;border:1px solid #dcdcdc;border-radius:3px;color:#333;text-align:center;line-height:27px;font-size:12px">取消</div>
<div class="a" style="left:890px;top:273px;width:242px;height:70px;border:3px solid #ff1a1a;border-radius:3px"></div>
<div class="a" style="left:1003px;top:604px;width:117px;height:68px;border:3px solid #ff1a1a;border-radius:3px"></div>
</body></html>
